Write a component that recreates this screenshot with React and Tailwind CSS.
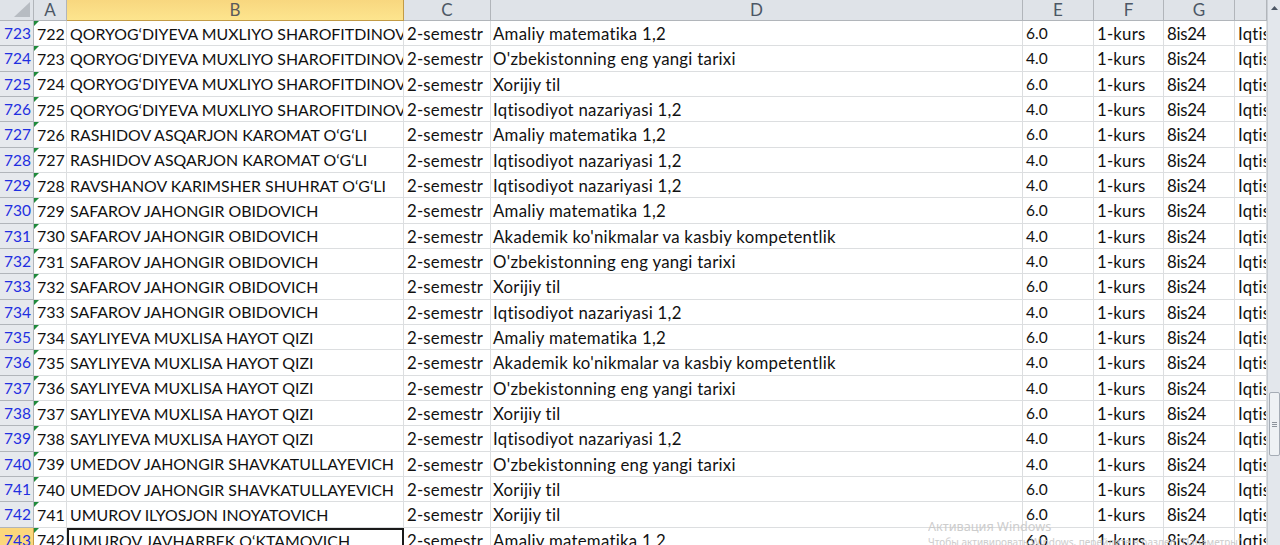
const Q = "QORYOG‘DIYEVA MUXLIYO SHAROFITDINOVNA";
const RA = "RASHIDOV ASQARJON KAROMAT O‘G‘LI";
const S = "SAFAROV JAHONGIR OBIDOVICH";
const SA = "SAYLIYEVA MUXLISA HAYOT QIZI";
const U = "UMEDOV JAHONGIR SHAVKATULLAYEVICH";
const AM = "Amaliy matematika 1,2";
const OZ = "O'zbekistonning eng yangi tarixi";
const XO = "Xorijiy til";
const IQ = "Iqtisodiyot nazariyasi 1,2";
const AK = "Akademik ko'nikmalar va kasbiy kompetentlik";

const rows = [
  [Q, AM, "6.0"], [Q, OZ, "4.0"], [Q, XO, "6.0"], [Q, IQ, "4.0"],
  [RA, AM, "6.0"], [RA, IQ, "4.0"],
  ["RAVSHANOV KARIMSHER SHUHRAT O‘G‘LI", IQ, "4.0"],
  [S, AM, "6.0"], [S, AK, "4.0"], [S, OZ, "4.0"], [S, XO, "6.0"], [S, IQ, "4.0"],
  [SA, AM, "6.0"], [SA, AK, "4.0"], [SA, OZ, "4.0"], [SA, XO, "6.0"], [SA, IQ, "4.0"],
  [U, OZ, "4.0"], [U, XO, "6.0"],
  ["UMUROV ILYOSJON INOYATOVICH", XO, "6.0"],
  ["UMUROV JAVHARBEK O‘KTAMOVICH", AM, "6.0"],
];

const base = "flex items-center overflow-hidden whitespace-nowrap border-r border-b border-[#dcdee0] pt-[1px]";
const cell = `${base} pl-[3px]`;
const lower = "text-[16.8px] tracking-[0.2px]";

function Head({ children, active }) {
  return (
    <div
      className={
        active
          ? "flex items-center justify-center border-r border-b border-[#c29b46] bg-gradient-to-b from-[#f8d77f] to-[#fde58e] text-[#5b5b5b] text-[17px]"
          : "flex items-center justify-center border-r border-b border-[#b1b5ba] bg-[#dfe3e8] text-[#4c5765] text-[17px]"
      }
    >
      {children}
    </div>
  );
}

export default function App() {
  return (
    <div className="flex h-[545px] w-[1280px] overflow-hidden bg-white font-['Lato',sans-serif] text-[15.5px] text-[#111] relative [font-variant-ligatures:none]">
      <div className="w-[1267px] shrink-0 overflow-hidden">
        <div className="grid grid-cols-[34px_33px_337px_87px_532px_71px_70px_71px_32px] grid-rows-[21px] auto-rows-[25.34px]">
          <div className="flex items-end justify-end border-r border-b border-[#b1b5ba] bg-[#dfe3e8] p-[3px]">
            <svg width="16" height="15" viewBox="0 0 16 15"><polygon points="16,0 16,15 0,15" fill="#b7bcc2" /></svg>
          </div>
          <Head>A</Head>
          <Head active>B</Head>
          <Head>C</Head>
          <Head>D</Head>
          <Head>E</Head>
          <Head>F</Head>
          <Head>G</Head>
          <Head></Head>
          {rows.map((r, i) => {
            const last = i === rows.length - 1;
            return [
              <div
                key={`h${i}`}
                className={
                  last
                    ? "flex items-center justify-end border-r border-b border-[#c29b46] bg-[#fbd77c] pr-[2px] pt-[1px] text-[#1f2fe0]"
                    : "flex items-center justify-end border-r border-b border-[#b1b5ba] bg-[#e6e9ed] pr-[2px] pt-[1px] text-[#1f2fe0]"
                }
              >
                {723 + i}
              </div>,
              <div key={`a${i}`} className={`${cell} relative text-[16px]`}>
                <span className="absolute left-0 top-0 h-0 w-0 border-t-[5px] border-r-[5px] border-t-[#1f8a3b] border-r-transparent" />
                {722 + i}
              </div>,
              <div
                key={`b${i}`}
                className={
                  last
                    ? "flex items-center overflow-hidden whitespace-nowrap border-2 border-[#1a1a1a] pl-[2px] pt-[1px] text-[15.9px]"
                    : `${cell} text-[15.9px]`
                }
              >
                {r[0]}
              </div>,
              <div key={`c${i}`} className={`${cell} ${lower}`}>2-semestr</div>,
              <div key={`d${i}`} className={`${base} pl-[2px] text-[16.8px] tracking-[0.27px]`}>{r[1]}</div>,
              <div key={`e${i}`} className={cell}>{r[2]}</div>,
              <div key={`f${i}`} className={`${cell} ${lower}`}>1-kurs</div>,
              <div key={`g${i}`} className={`${cell} text-[16.8px] tracking-[-0.3px]`}>8is24</div>,
              <div key={`i${i}`} className={`${cell} ${lower}`}>Iqtisodiyot</div>,
            ];
          })}
        </div>
      </div>
      <div className="flex w-[13px] flex-col items-center border-l border-[#c9ced4] bg-[#e3e7ec]">
        <svg className="mt-[6px] shrink-0" width="7" height="4" viewBox="0 0 7 4"><polygon points="3.5,0 7,4 0,4" fill="#4c5765" /></svg>
        <div className="mt-[382px] flex h-[64px] w-[11px] shrink-0 flex-col items-center justify-center gap-[1px] rounded-[2px] border border-[#a5acb5] bg-[#eef1f4]">
          <span className="h-px w-[5px] bg-[#8d949c]" />
          <span className="h-px w-[5px] bg-[#8d949c]" />
          <span className="h-px w-[5px] bg-[#8d949c]" />
        </div>
      </div>
      <div className="absolute left-[928px] top-[518px] text-[#c8c8c8] opacity-90 whitespace-nowrap font-['Noto_Sans',sans-serif]">
        <div className="text-[12.7px] leading-[17px]">Активация Windows</div>
        <div className="text-[10px] leading-[14px]">Чтобы активировать Windows, перейдите в раздел "Параметры".</div>
      </div>
    </div>
  );
}
